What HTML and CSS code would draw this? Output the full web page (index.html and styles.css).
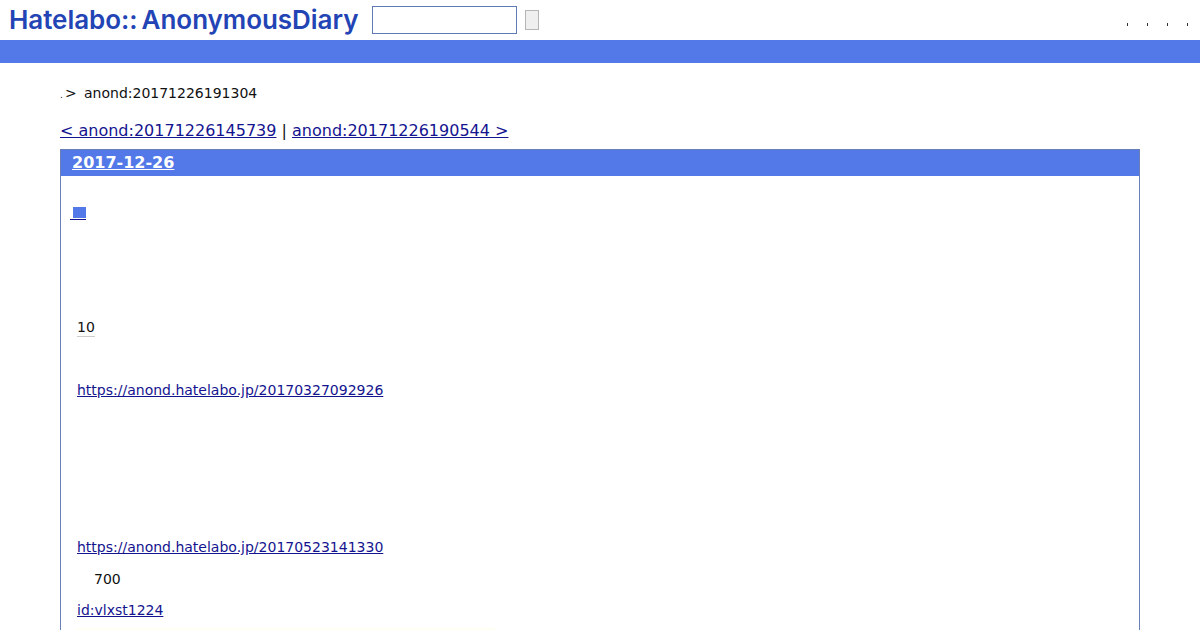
FILE: index.html
```html
<!DOCTYPE html>
<html lang="en">
<head>
  <meta charset="UTF-8">
  <title>anond:20171226191304</title>
  <link rel="stylesheet" href="styles.css">
</head>
<body>
  <div class="header">
    <a class="logo" href="#">Hatelabo::<span class="logo-name">AnonymousDiary</span></a>
    <form class="search">
      <input type="text" class="search-box">
      <button type="button" class="search-btn"></button>
    </form>
    <div class="menu">
      <span class="menu-dot"></span>
      <span class="menu-dot"></span>
      <span class="menu-dot"></span>
      <span class="menu-dot"></span>
    </div>
  </div>
  <div class="bar"></div>

  <div class="main">
    <div class="crumbs"><span class="crumb-dot">.</span><span class="crumb-sep">&gt;</span><span>anond:20171226191304</span></div>
    <div class="pager">
      <a href="#">&lt; anond:20171226145739</a> | <a href="#">anond:20171226190544 &gt;</a>
    </div>

    <div class="day">
      <h2 class="day-title"><a href="#">2017-12-26</a></h2>
      <div class="day-body">
        <h3 class="entry-title"><a href="#"><span class="square"></span></a></h3>
        <p class="count"><span class="count-num">10</span></p>
        <p class="after-count"><a href="#">https://anond.hatelabo.jp/20170327092926</a></p>
        <p class="after-link"><a href="#">https://anond.hatelabo.jp/20170523141330</a></p>
        <p class="amount">700</p>
        <p class="user"><a href="#">id:vlxst1224</a></p>
        <div class="tail"></div>
      </div>
    </div>
  </div>
</body>
</html>
```

FILE: styles.css
```css
html, body { height: 630px; overflow: hidden; }
body { margin: 0; background: #fff; color: #111; font-family: "DejaVu Sans", sans-serif; font-size: 14px; }
a { color: #14148f; }

.header { display: flex; align-items: center; height: 40px; padding-left: 9px; }
.logo { width: 363px; padding-bottom: 2px; font-family: "Inter", sans-serif; font-size: 26px; font-weight: 600; letter-spacing: -0.04px; color: #2344b4; text-decoration: none; white-space: nowrap; }
.logo-name { margin-left: 4px; }
.search { display: flex; align-items: center; }
.search-box { box-sizing: border-box; width: 145px; height: 28px; margin: 0 8px 0 0; padding: 0; background: #fff; border: 1px solid #5f7bb5; }
.search-btn { box-sizing: border-box; width: 14px; height: 20px; padding: 0; background: #efefef; border: 1px solid #b5b5b5; }
.menu { display: flex; gap: 19px; margin-left: auto; margin-right: 12px; padding-top: 8px; }
.menu-dot { width: 1px; height: 3px; background: #333; }

.bar { height: 23px; background: #5279e7; }

.main { padding: 0 60px; }
.crumbs { display: flex; align-items: baseline; height: 17px; margin-top: 22px; }
.crumb-dot { width: 5px; font-size: 9px; }
.crumb-sep { width: 19px; }
.pager { margin-top: 19px; font-size: 16px; line-height: 20px; }

.day { margin-top: 8px; border: 1px solid #6a7fb5; border-bottom: 0; }
.day-title { height: 26px; margin: 0; padding-left: 11px; background: #5279e7; font-size: 16px; line-height: 25px; }
.day-title a { color: #fff; }
.day-body { height: 454px; padding: 0 16px; overflow: hidden; }
.entry-title { height: 17px; margin: 29px 0 0 -7px; font-size: 14px; line-height: 17px; }
.entry-title a { display: inline-block; height: 14px; padding-left: 3px; padding-right: 0; border-bottom: 1px solid #14148f; }
.square { display: block; width: 13px; height: 11px; margin-top: 2px; background: #5279e7; }
.count { margin: 97px 0 0; line-height: 17px; }
.count-num { padding-bottom: 1px; border-bottom: 1px solid #ccc; }
.after-count { margin: 46px 0 0; line-height: 17px; }
.after-link { margin: 140px 0 0; line-height: 17px; }
.amount { margin: 15px 0 0 17px; line-height: 17px; }
.user { margin: 14px 0 0; line-height: 17px; }
.tail { width: 418px; height: 2px; margin-top: 9px; background: #fffff2; }
```
